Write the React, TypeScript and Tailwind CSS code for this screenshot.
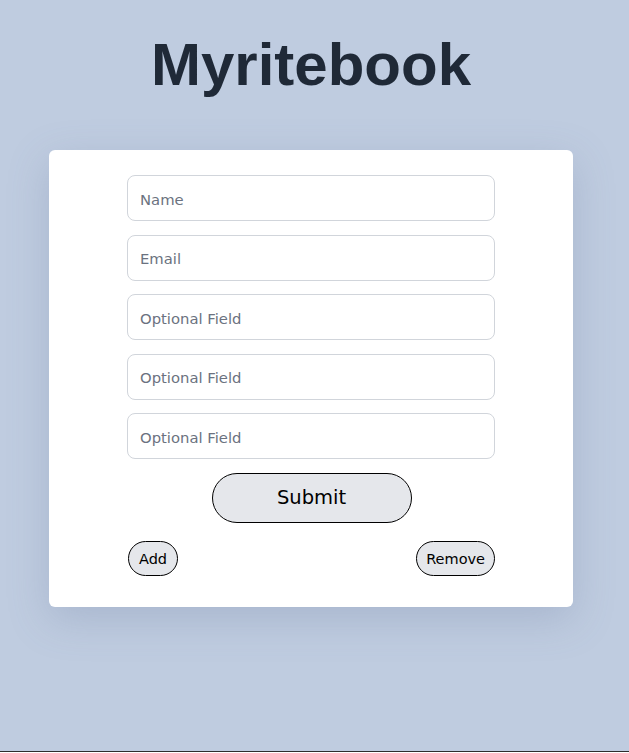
import React from "react";

const fields = ["Name", "Email", "Optional Field", "Optional Field", "Optional Field"];

export default function App() {
  return (
    <div className="min-h-screen bg-white font-['DejaVu_Sans',sans-serif]">
      <div className="flex h-[751px] flex-col items-center bg-[#bfcce0] pr-[7px]">
        <h1 className="mt-[29px] font-['Liberation_Sans',Arial,sans-serif] text-[60px] font-bold leading-[72px] text-[#1f2937]">
          Myritebook
        </h1>

        <div className="mt-[49px] flex w-[524px] flex-col items-center rounded-md bg-white pb-[31px] pt-[25px] shadow-[0_12px_40px_rgba(100,116,150,0.25)]">
          <form className="flex w-[368px] flex-col gap-[13.5px]" onSubmit={(e) => e.preventDefault()}>
            {fields.map((label, i) => (
              <input
                key={i}
                type="text"
                placeholder={label}
                className="h-[46px] w-full rounded-lg border border-[#d1d5db] bg-white px-[12px] pt-[2px] text-[14.8px] text-gray-800 outline-none placeholder:text-[#6b7280]"
              />
            ))}

            <div className="flex justify-center">
              <button
                type="submit"
                className="ml-[1px] h-[50px] w-[200px] rounded-full border border-black bg-[#e5e7eb] pt-[1px] text-[19.5px] text-black"
              >
                Submit
              </button>
            </div>

            <div className="mt-[5px] flex items-center justify-between">
              <button
                type="button"
                className="ml-[1px] h-[35px] rounded-full border border-black bg-[#e5e7eb] px-[10px] pt-[3px] text-[14.5px] text-black"
              >
                Add
              </button>
              <button
                type="button"
                className="h-[35px] rounded-full border border-black bg-[#e5e7eb] px-[9px] pt-[3px] text-[14.5px] text-black"
              >
                Remove
              </button>
            </div>
          </form>
        </div>
      </div>
      <div className="h-px bg-[#2d2d2d]" />
    </div>
  );
}
